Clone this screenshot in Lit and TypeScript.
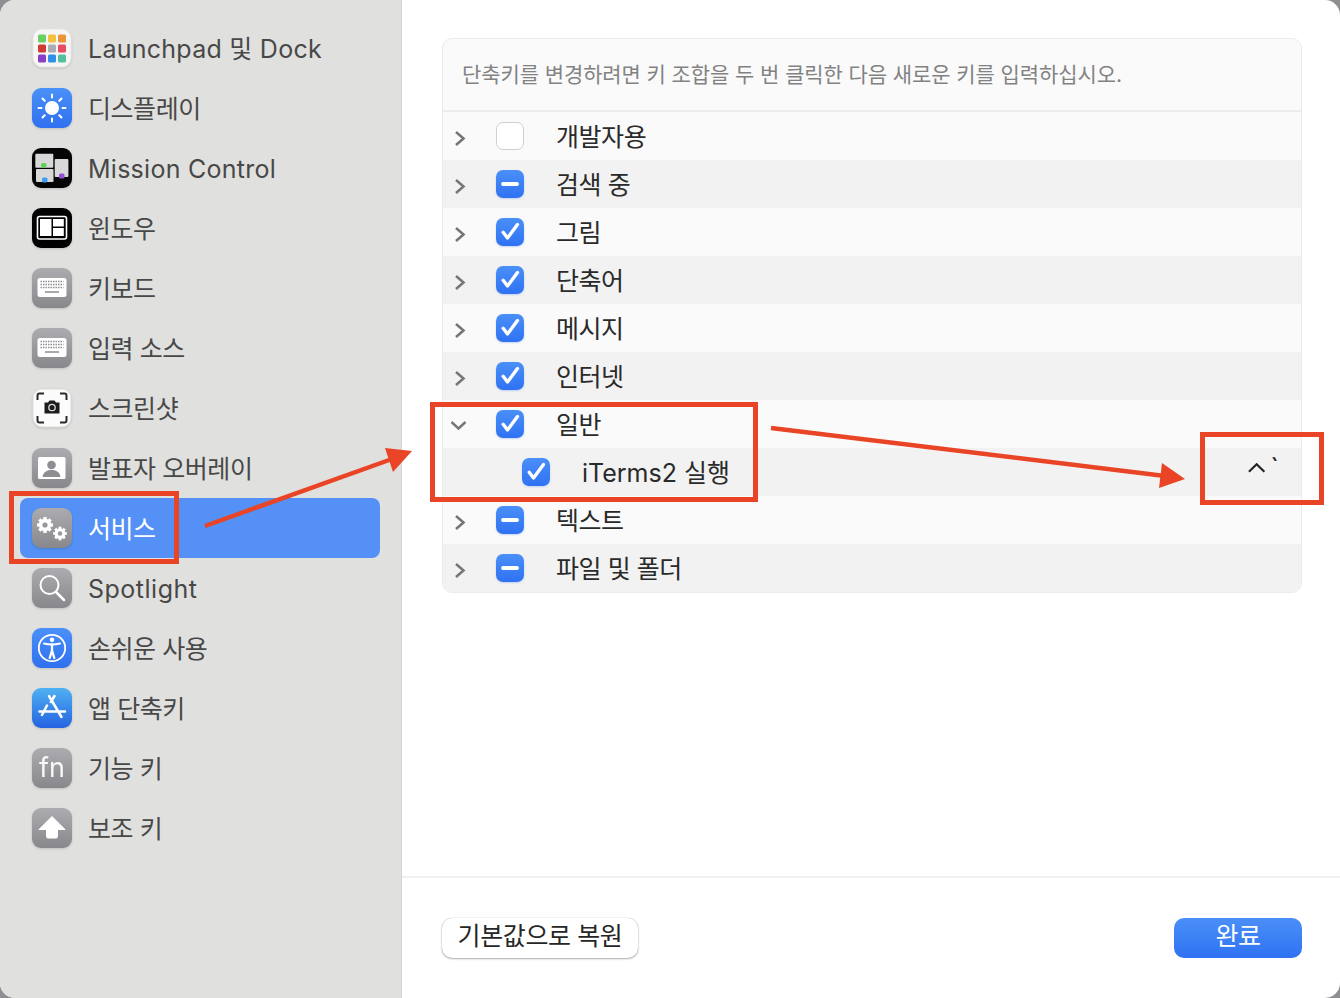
import { LitElement, html, css, svg } from "lit";
import { customElement } from "lit/decorators.js";

const grayBg = (id: string) => svg`<defs><linearGradient id=${id} x1="0" y1="0" x2="0" y2="1"><stop offset="0" stop-color="#acacb0"/><stop offset="1" stop-color="#88888c"/></linearGradient></defs><rect x="0" y="0" width="40" height="40" rx="9" fill="url(#${id})"/>`;
const blueBg = (id: string, a = "#4a90f8", b = "#2f70f0") => svg`<defs><linearGradient id=${id} x1="0" y1="0" x2="0" y2="1"><stop offset="0" stop-color=${a}/><stop offset="1" stop-color=${b}/></linearGradient></defs><rect x="0" y="0" width="40" height="40" rx="9" fill="url(#${id})"/>`;
const keyboard = svg`<rect x="5.500" y="10" width="29" height="19" rx="2.500" fill="#fff"/>
  <path d="M8.500 13.500h23M8.500 16.500h23M8.500 19.500h23" stroke="#8e8e92" stroke-width="1.500" stroke-dasharray="1.500 1"/><path d="M13 24h14" stroke="#a8a8ac" stroke-width="2"/>`;
const gear = (cx: number, cy: number, r: number, fill: string) => svg`<g transform="translate(${cx} ${cy})">
  ${[0, 45, 90, 135].map((a) => svg`<rect x=${-r * 0.27} y=${-r * 1.28} width=${r * 0.54} height=${r * 2.56} fill="#fff" transform="rotate(${a})"/>`)}
  <circle r=${r} fill="#fff"/><circle r=${r * 0.42} fill=${fill}/></g>`;

const icons: Record<string, () => unknown> = {
  launchpad: () => {
    const cs = ["#6bd064", "#f3c042", "#ea9638", "#cf3b33", "#a9aeb2", "#e84b66", "#8b3fc6", "#2f8fea", "#52bf9e"];
    return svg`<rect x="1" y="1" width="38" height="38" rx="9" fill="#f6f6f5" stroke="#e8e8e6"/>
      ${cs.map((c, i) => svg`<rect x=${6 + (i % 3) * 10} y=${6.500 + Math.floor(i / 3) * 10} width="8" height="8" rx="1.500" fill=${c}/>`)}`;
  },
  display: () => svg`${blueBg("g1")}<circle cx="20" cy="20" r="7" fill="#fff"/>
    <g stroke="#fff" stroke-width="2" stroke-linecap="round"><path d="M20 6.500v3M20 30.500v3M6.500 20h3M30.500 20h3M10.500 10.500l2.200 2.200M27.300 27.300l2.200 2.200M29.500 10.500l-2.200 2.200M12.700 27.300l-2.200 2.200"/></g>`,
  mission: () => svg`<rect width="40" height="40" rx="9" fill="#050505"/>
    <rect x="3.300" y="5.700" width="18" height="14" rx="1" fill="#d8d8d8"/><rect x="4" y="21" width="17.500" height="13" rx="1" fill="#d8d8d8"/><rect x="22.700" y="11" width="13.700" height="18" rx="1" fill="#d8d8d8"/>
    <rect x="9" y="15" width="5.500" height="4.500" rx="1.500" fill="#5fd05a"/><rect x="10" y="29.500" width="5.500" height="5" rx="1.500" fill="#3e9cf2"/><rect x="27" y="25.500" width="5.500" height="5" rx="1.500" fill="#9a4fd0"/>`,
  windows: () => svg`<rect width="40" height="40" rx="9" fill="#000"/>
    <rect x="5.500" y="8.500" width="29" height="22.500" rx="2" fill="none" stroke="#fff" stroke-width="1.600"/>
    <rect x="8" y="11" width="11.500" height="17" fill="#fff"/><rect x="21" y="11" width="10.800" height="7.500" fill="#fff"/><rect x="21" y="20" width="10.800" height="8" fill="#fff"/>`,
  keyboard: () => svg`${grayBg("g2")}${keyboard}`,
  input: () => svg`${grayBg("g3")}${keyboard}`,
  screenshot: () => svg`<rect x="1" y="1" width="38" height="38" rx="9" fill="#fbfbfb" stroke="#dcdcdc"/>
    <path d="M5.500 12V7.500a2 2 0 0 1 2-2H12M28 5.500h4.500a2 2 0 0 1 2 2V12M34.500 28v4.500a2 2 0 0 1-2 2H28M12 34.500H7.500a2 2 0 0 1-2-2V28" fill="none" stroke="#2a2a2a" stroke-width="2"/>
    <path d="M12.500 14.500h3.500l1.500-2h5l1.500 2h3.500v11h-15z" fill="#1d1d1d"/><circle cx="20" cy="19.500" r="3.200" fill="none" stroke="#ddd" stroke-width="1.300"/>`,
  presenter: () => svg`${grayBg("g4")}<rect x="6" y="9" width="27.500" height="22" rx="1.500" fill="#fff"/>
    <circle cx="19.500" cy="17" r="4.300" fill="#8e8e92"/><path d="M10.500 29c1-5.500 5-7 9-7s8 1.500 9 7z" fill="#8e8e92"/>`,
  services: () => svg`${grayBg("g5")}${gear(13, 17, 6.200, "#98989c")}${gear(28, 25.500, 5.300, "#98989c")}`,
  spotlight: () => svg`${grayBg("g6")}<circle cx="17.500" cy="17" r="9" fill="none" stroke="#fff" stroke-width="2"/><path d="M24 24l8 8" stroke="#fff" stroke-width="2.500" stroke-linecap="round"/>`,
  access: () => svg`${blueBg("g7")}<circle cx="20" cy="20" r="13.200" fill="none" stroke="#fff" stroke-width="1.800"/><circle cx="20" cy="11.800" r="2.200" fill="#fff"/>
    <path d="M12 15.500c5 1.300 11 1.300 16 0" fill="none" stroke="#fff" stroke-width="2" stroke-linecap="round"/>
    <path d="M20 16.500v7M20 22.500l-2.300 7.500M20 22.500l2.300 7.500" fill="none" stroke="#fff" stroke-width="2.300" stroke-linecap="round"/>`,
  appstore: () => svg`${blueBg("g8", "#4fb0f2", "#2563e0")}<g stroke="#fff" stroke-width="2.500" stroke-linecap="round" fill="none">
    <path d="M17 8L29.500 29M22.500 8L18.800 14M15 17.500L10 27M7.500 23.500H33"/></g>`,
  fn: () => svg`${grayBg("g9")}<text x="20" y="28.500" text-anchor="middle" font-size="27" fill="#f8f8f8" font-family="Inter, sans-serif" font-weight="400">fn</text>`,
  modifier: () => svg`${grayBg("g10")}<path d="M20 8.500L33 21.500h-7.500v7a1.500 1.500 0 0 1-1.500 1.500h-8a1.500 1.500 0 0 1-1.500-1.500v-7H7z" fill="#fff" stroke="#fff" stroke-linejoin="round" stroke-width="1"/>`,
};

const items: [string, string, string][] = [
  ["launchpad", "Launchpad 및 Dock", "lat"], ["display", "디스플레이", "ko"], ["mission", "Mission Control", "lat lo"], ["windows", "윈도우", "ko"],
  ["keyboard", "키보드", "ko"], ["input", "입력 소스", "ko"], ["screenshot", "스크린샷", "ko"], ["presenter", "발표자 오버레이", "ko"],
  ["services", "서비스", "ko"], ["spotlight", "Spotlight", "lat lo wide"], ["access", "손쉬운 사용", "ko"], ["appstore", "앱 단축키", "ko"],
  ["fn", "기능 키", "ko"], ["modifier", "보조 키", "ko"],
];

type State = "off" | "mixed" | "on";
interface Row { label: string; state: State; chevron?: "right" | "down"; child?: boolean; shortcut?: boolean }
const rows: Row[] = [
  { label: "개발자용", state: "off", chevron: "right" },
  { label: "검색 중", state: "mixed", chevron: "right" },
  { label: "그림", state: "on", chevron: "right" },
  { label: "단축어", state: "on", chevron: "right" },
  { label: "메시지", state: "on", chevron: "right" },
  { label: "인터넷", state: "on", chevron: "right" },
  { label: "일반", state: "on", chevron: "down" },
  { label: "iTerms2 실행", state: "on", child: true, shortcut: true },
  { label: "텍스트", state: "mixed", chevron: "right" },
  { label: "파일 및 폴더", state: "mixed", chevron: "right" },
];

@customElement("app-root")
export class AppRoot extends LitElement {
  static styles = css`
    :host { display: block; width: 1340px; height: 998px; background: #8f8f92; position: relative; overflow: hidden;
      font-family: Inter, "Noto Sans CJK KR", sans-serif; }
    .window { display: flex; width: 1340px; height: 998px; border-radius: 15px; overflow: hidden; background: #fff; }
    .side { box-sizing: border-box; width: 402px; height: 100%; background: #e0e0de; border-right: 1px solid #d4d4d2; padding: 18px 21px 0 20px; flex: none; }
    .item { display: flex; align-items: center; height: 60px; padding-left: 12px; border-radius: 8px; color: #484848; font-size: 25px; }
    .item.sel { background: #5490f5; color: #fff; }
    .item svg { width: 40px; height: 40px; flex: none; margin-right: 16px; filter: drop-shadow(0 1px 1px rgba(0,0,0,.15)); }
    .item .ko { letter-spacing: -0.45px; padding-bottom: 2px; }
    .item .lat { letter-spacing: 0.26px; padding-bottom: 2px; }
    .item .lat.lo { padding-bottom: 0; padding-top: 2px; }
    .item .lat.wide { letter-spacing: 0.5px; }
    .main { flex: 1; display: flex; flex-direction: column; min-width: 0; }
    .content { flex: 1; padding: 38px 38px 0 40px; }
    .table { border: 1px solid #ebebeb; border-radius: 10px; overflow: hidden; background: #fafafa; }
    .desc { box-sizing: border-box; height: 73px; display: flex; align-items: center; padding: 0 0 4px 19px; color: #828282; font-size: 21px; letter-spacing: -0.1px; border-bottom: 2px solid #ececec; }
    .row { display: flex; align-items: center; height: 48px; color: #2a2a2a; font-size: 25px; letter-spacing: -0.45px; background: #fafafa; }
    .row:nth-child(even) { background: #f2f2f2; }
    .row.child { letter-spacing: 0; }
    .chev { width: 53px; flex: none; display: flex; padding: 4px 0 0 6px; box-sizing: border-box; }
    .chev svg { width: 20px; height: 18px; }
    .row.child .chev { width: 79px; }
    .box { width: 28px; height: 28px; flex: none; box-sizing: border-box; border-radius: 7px; margin-right: 32px; display: flex; align-items: center; justify-content: center;
      background: linear-gradient(#4a8ff8, #2f72f2); box-shadow: 0 1px 2px rgba(50,110,240,.25); }
    .box.off { background: #fff; border: 1px solid #cfcfcf; box-shadow: none; }
    .box svg { width: 28px; height: 28px; }
    .label { flex: 1; padding-bottom: 2px; }
    .keys { display: flex; align-items: flex-start; margin-right: 22px; width: 32px; height: 24px; color: #222; font-size: 27px; line-height: 18px; letter-spacing: 0; }
    .keys svg { width: 20px; height: 14px; margin-top: 1px; margin-right: 4px; }
    .foot { height: 122px; box-sizing: border-box; border-top: 2px solid #f0f0f0; display: flex; align-items: center; justify-content: space-between; padding: 0 38px 0 40px; flex: none; }
    .btn { height: 40px; box-sizing: border-box; border-radius: 10px; font-size: 25px; letter-spacing: -0.4px; padding-bottom: 3px; display: flex; align-items: center; justify-content: center; line-height: 1; }
    .btn.sec { width: 196px; background: #fff; color: #262626; box-shadow: 0 0 1px rgba(0,0,0,.35), 0 1px 2px rgba(0,0,0,.3); }
    .btn.pri { width: 128px; color: #fff; background: linear-gradient(#4a8ff8, #2f72f2); }
    .marks { position: absolute; left: 0; top: 0; width: 1340px; height: 998px; pointer-events: none; }
  `;

  private check(s: State) {
    if (s === "off") return html`<div class="box off"></div>`;
    return html`<div class="box">
      <svg viewBox="0 0 28 28">
        ${s === "on"
          ? svg`<path d="M7.200 14.300l4.300 5.700 10-13.500" fill="none" stroke="#fff" stroke-width="3.400" stroke-linecap="round" stroke-linejoin="round"/>`
          : svg`<path d="M7 14h14" stroke="#fff" stroke-width="3.800" stroke-linecap="round"/>`}
      </svg></div>`;
  }

  private chev(c?: "right" | "down") {
    if (!c) return html`<div class="chev"></div>`;
    return html`<div class="chev"><svg viewBox="0 0 20 18">
      ${c === "right"
        ? svg`<path d="M7 3l7.500 6.500L7 16" fill="none" stroke="#777" stroke-width="2.600"/>`
        : svg`<path d="M2.500 5l7 6.500 7-6.500" fill="none" stroke="#777" stroke-width="2.400"/>`}
    </svg></div>`;
  }

  render() {
    const red = "#ea4426";
    return html`<div class="window">
        <nav class="side">
          ${items.map(([k, t, c]) => html`<div class="item ${k === "services" ? "sel" : ""}"><svg viewBox="0 0 40 40">${icons[k]()}</svg><span class=${c}>${t}</span></div>`)}
        </nav>
        <section class="main">
          <div class="content">
            <div class="table">
              <div class="desc">단축키를 변경하려면 키 조합을 두 번 클릭한 다음 새로운 키를 입력하십시오.</div>
              <div>
                ${rows.map((r) => html`<div class="row ${r.child ? "child" : ""}">
                  ${this.chev(r.chevron)}${this.check(r.state)}
                  <span class="label">${r.label}</span>
                  ${r.shortcut ? html`<span class="keys"><svg viewBox="0 0 20 14"><path d="M2 11l8-8 8 8" fill="none" stroke="#222" stroke-width="2.200"/></svg>\`</span>` : ""}
                </div>`)}
              </div>
            </div>
          </div>
          <footer class="foot">
            <div class="btn sec">기본값으로 복원</div>
            <div class="btn pri">완료</div>
          </footer>
        </section>
      </div>
      <svg class="marks" viewBox="0 0 1340 998">
        <g fill="none" stroke=${red} stroke-width="5">
          <rect x="11.500" y="493.500" width="165" height="68"/>
          <rect x="432.500" y="404.500" width="323" height="95"/>
          <rect x="1202.500" y="434.500" width="119" height="68"/>
        </g>
        <path d="M205 526L392 459" stroke=${red} stroke-width="4.500"/>
        <path d="M412 451L385 448L393 472Z" fill=${red}/>
        <path d="M771 428L1165 476" stroke=${red} stroke-width="4.500"/>
        <path d="M1185 479L1162 463L1159 488Z" fill=${red}/>
      </svg>`;
  }
}
